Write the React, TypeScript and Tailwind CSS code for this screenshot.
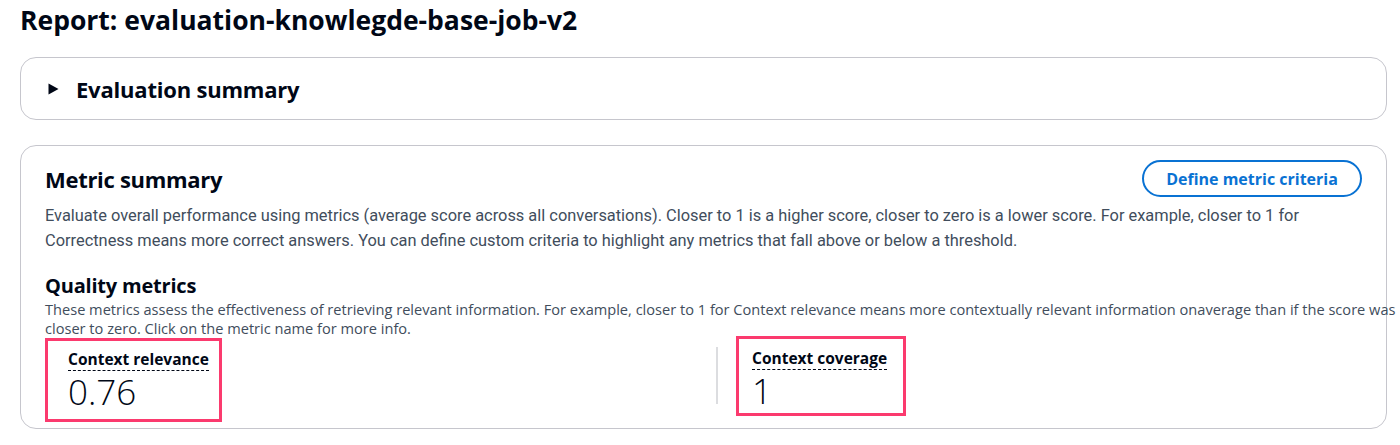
import React from "react";

export default function App() {
  return (
    <div className="w-[1400px] h-[445px] overflow-hidden bg-white pl-5 pr-[13px] text-[#000716] font-['Open_Sans',sans-serif]">
      <h1 className="pt-[2px] text-[26.5px] font-bold leading-[36px]">
        Report: evaluation-knowlegde-base-job-v2
      </h1>

      <div className="mt-[19px] h-[63px] rounded-[16px] border border-[#c6c6cd] flex items-center pl-[27px]">
        <svg width="11" height="12" viewBox="0 0 11 12" className="shrink-0">
          <path d="M0.5 0.5 L10.5 6 L0.5 11.5 Z" fill="#000716" />
        </svg>
        <span className="ml-[17px] text-[22px] font-bold leading-[30px] tracking-[-0.2px]">Evaluation summary</span>
      </div>

      <div className="mt-[25px] h-[284px] rounded-[16px] border border-[#c6c6cd] px-6 pt-[14px]">
        <div className="flex items-center justify-between h-[37px]">
          <h2 className="text-[22px] font-bold leading-[30px] tracking-[-0.3px]">Metric summary</h2>
          <button className="h-[37px] w-[220px] rounded-full border-2 border-[#0972d3] text-[#0972d3] text-[16px] font-bold leading-[20px]">
            Define metric criteria
          </button>
        </div>

        <p className="mt-[6px] text-[16.4px] leading-[25px] text-[#414d5c] whitespace-nowrap font-['Roboto',sans-serif]">
          Evaluate overall performance using metrics (average score across all conversations). Closer to 1 is a higher score, closer to zero is a lower score. For example, closer to 1 for
          <br />
          Correctness means more correct answers. You can define custom criteria to highlight any metrics that fall above or below a threshold.
        </p>

        <h3 className="mt-[19px] text-[20px] font-bold leading-[28px] tracking-[-0.2px]">Quality metrics</h3>
        <p className="text-[14.6px] leading-[19px] text-[#414d5c] whitespace-nowrap">
          These metrics assess the effectiveness of retrieving relevant information. For example, closer to 1 for Context relevance means more contextually relevant information onaverage than if the score was
          <br />
          closer to zero. Click on the metric name for more info.
        </p>

        <div className="flex items-start">
          <div className="w-[671px] shrink-0">
            <div className="w-[177px] h-[84px] border-[3px] border-[#fb3a6e] pl-[20px] pt-[6px]">
              <span className="text-[15.5px] font-bold leading-[20px] border-b border-dashed border-[#000716]">Context relevance</span>
              <div className="text-[35px] font-light leading-[40px] mt-[1px]">0.76</div>
            </div>
          </div>
          <div className="flex items-start">
            <div className="mt-[9px] h-[57px] w-[2px] bg-[#dcdde0]" />
            <div className="ml-[18px] -mt-[2px] w-[170px] h-[80px] border-[3px] border-[#fb3a6e] pl-[13px] pt-[7px]">
              <span className="text-[15.5px] font-bold leading-[20px] border-b border-dashed border-[#000716]">Context coverage</span>
              <div className="text-[35px] font-light leading-[40px] mt-[1px]">1</div>
            </div>
          </div>
        </div>
      </div>
    </div>
  );
}
